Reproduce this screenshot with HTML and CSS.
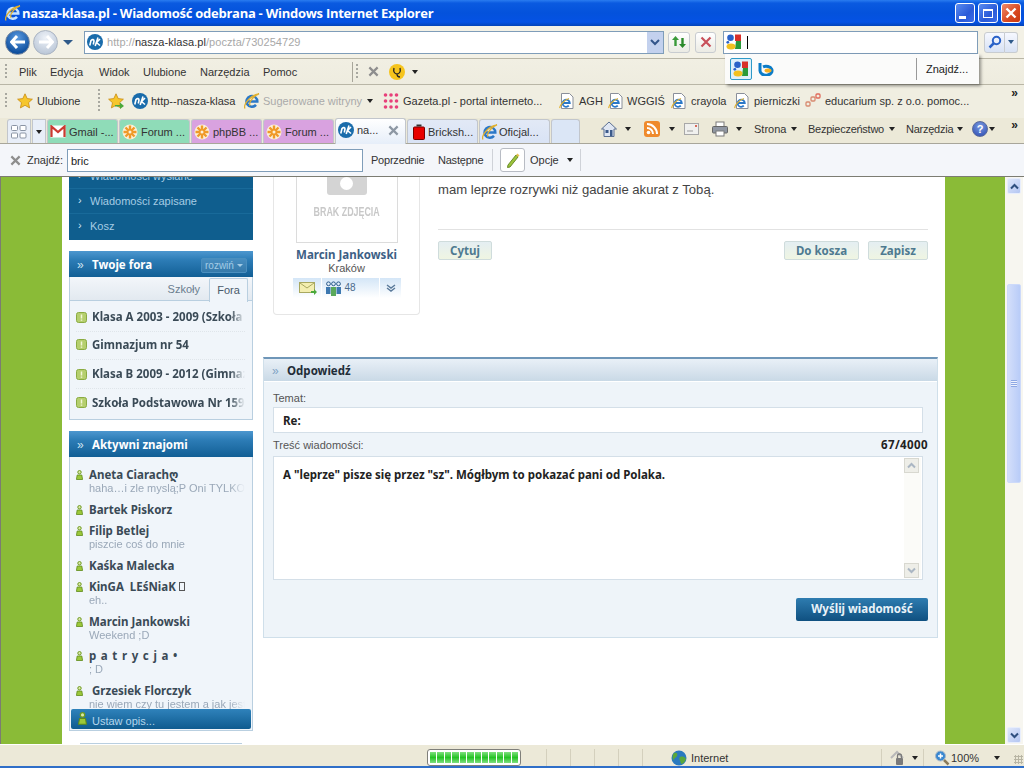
FILE: index.html
```html
<!DOCTYPE html>
<html lang="pl">
<head>
<meta charset="utf-8">
<title>nasza-klasa.pl - Wiadomość odebrana - Windows Internet Explorer</title>
<link rel="stylesheet" href="styles.css">
</head>
<body>
<svg class="defs" width="0" height="0">
  <defs>
    <symbol id="nk" viewBox="0 0 16 16"><circle cx="8" cy="8" r="8" fill="#1a6cab"/><path d="M2.800 11.500 4 6.500c1.500-1.500 3-1 3 .5l-.7 3.500M8.200 12 11 3.500M13 5 9.500 8.500l3.500 3" fill="none" stroke="#fff" stroke-width="1.600"/></symbol>
    <symbol id="ie" viewBox="0 0 16 16"><path d="M2.500 8.500h10.800a5.400 5.400 0 1 0-1.300 3.400" fill="none" stroke="currentColor" stroke-width="2.500"/><path d="M1 15.500C-1 12 6 2 15 .8c-3 1-11 7-9 12" fill="none" stroke="#e0b030" stroke-width="1.300"/></symbol>
    <symbol id="doc" viewBox="0 0 16 16"><path d="M2.500.5h8l3.500 3.500v11.500H2.500z" fill="#fff" stroke="#8a8f9a"/><path d="M3.800 10h7a3.600 3.600 0 1 0-1 2.700" fill="none" stroke="#2b78c8" stroke-width="1.800"/><path d="M1 15C0 13 5 7 10 5.500" fill="none" stroke="#e0b030" stroke-width="1.300"/></symbol>
    <symbol id="flower" viewBox="0 0 16 16"><circle cx="8" cy="8" r="7.500" fill="#fbf0d8"/><path d="M8 1.500v13M1.500 8h13M3.500 3.500l9 9M12.500 3.500l-9 9" stroke="#f09a28" stroke-width="2.400"/><circle cx="8" cy="8" r="1.500" fill="#fbf0d8"/></symbol>
    <symbol id="goog" viewBox="0 0 16 16"><path d="M9 .5h6v6.500H9z" fill="#d8302a"/><path d="M10 7h5v8H9z" fill="#2a9a3a"/><circle cx="4.500" cy="3.800" r="3.300" fill="#2a62c8"/><circle cx="1.800" cy="8.300" r="1.400" fill="#2a62c8"/><ellipse cx="5" cy="12.500" rx="4.500" ry="3" fill="#f2c020"/></symbol>
    <symbol id="friend" viewBox="0 0 7 10"><circle cx="3.500" cy="2.200" r="1.700" fill="#dbe8a8" stroke="#6e9a20"/><path d="M1.200 5h4.600l.8 4.500H.4z" fill="#9cc83a" stroke="#5e8a1a" stroke-width=".8"/></symbol>
    <symbol id="alert" viewBox="0 0 11 11"><rect x=".5" y=".5" width="10" height="10" rx="2" fill="#b5cf6e" stroke="#8aab42"/><path d="M5.500 2.500v4M5.500 7.500v1.200" stroke="#f3f7d8" stroke-width="1.500"/></symbol>
    <symbol id="chev" viewBox="0 0 9 7"><path d="M1 5.500 4.500 2 8 5.500" fill="none" stroke="#2f4f7f" stroke-width="2"/></symbol>
    <symbol id="star" viewBox="0 0 16 16"><path d="m8 .8 2.200 4.800 5.200.6-3.900 3.500 1.100 5.200L8 12.300l-4.600 2.600 1.100-5.200L.6 6.200l5.200-.6z" fill="#f6c62c" stroke="#c98a10" stroke-width=".8"/></symbol>
  </defs>
</svg>

<div class="window">
  <header class="titlebar">
    <svg class="ico16 title-ico"><use href="#ie"/></svg>
    <span class="title-text">nasza-klasa.pl - Wiadomość odebrana - Windows Internet Explorer</span>
    <div class="win-btns">
      <span class="win-btn"><i class="glyph-min"></i></span>
      <span class="win-btn"><i class="glyph-max"></i></span>
      <span class="win-btn win-close">
        <svg width="12" height="12" viewBox="0 0 12 12"><path d="m1.500 1.500 9 9m0-9-9 9" stroke="#fff" stroke-width="2.400"/></svg>
      </span>
    </div>
  </header>

  <div class="addressbar">
    <span class="nav-back"><svg width="16" height="14" viewBox="0 0 16 14"><path d="M7 1 1.500 7 7 13M2 7h13" fill="none" stroke="#fff" stroke-width="3"/></svg></span>
    <span class="nav-fwd"><svg width="16" height="14" viewBox="0 0 16 14"><path d="M9 1l5.500 6L9 13M14 7H1" fill="none" stroke="#fff" stroke-width="3"/></svg></span>
    <i class="arrow-blue"></i>
    <div class="urlbox">
      <svg class="ico16"><use href="#nk"/></svg>
      <span class="url"><span class="url-dim">http://</span>nasza-klasa.pl<span class="url-dim">/poczta/730254729</span></span>
      <span class="url-drop"><svg width="10" height="7" viewBox="0 0 10 7"><path d="M1 1l4 4 4-4" fill="none" stroke="#33558a" stroke-width="2"/></svg></span>
    </div>
    <span class="tool-btn btn-refresh"><svg width="16" height="14" viewBox="0 0 16 14"><path d="M4.500 1 1 5h2.300v6h2.400V5H8z" fill="#3a9a3a"/><path d="M11.500 13 15 9h-2.300V3h-2.400v6H8z" fill="#2a8a2a"/></svg></span>
    <span class="tool-btn btn-stop"><svg width="12" height="12" viewBox="0 0 12 12"><path d="m1.500 1.500 9 9m0-9-9 9" stroke="#c8505a" stroke-width="2.200"/></svg></span>
    <div class="searchbox"><svg class="ico16"><use href="#goog"/></svg><i class="caret"></i></div>
    <span class="tool-btn btn-search"><svg width="14" height="14" viewBox="0 0 14 14"><circle cx="8.500" cy="5.500" r="3.700" fill="none" stroke="#2a62c8" stroke-width="2"/><path d="M6 8 1.500 12.500" stroke="#2a62c8" stroke-width="2.500"/></svg></span>
    <span class="tool-btn btn-search-drop"><i class="arrow-blue small"></i></span>
  </div>

  <div class="search-pop">
    <span class="pop-active"><svg class="ico16"><use href="#goog"/></svg></span>
    <svg class="bing" width="18" height="14" viewBox="0 0 18 14"><path d="M2 1v7.500a6 4.500 0 1 0 3-3.700" fill="none" stroke="#0c7cc8" stroke-width="3"/><ellipse cx="10" cy="8.500" rx="3.500" ry="2" fill="#f8b020"/></svg>
    <span class="pop-find">Znajdź...</span>
  </div>

  <nav class="menubar">
    <i class="grip"></i>
    <span class="menu-items"><span>Plik</span><span>Edycja</span><span>Widok</span><span>Ulubione</span><span>Narzędzia</span><span>Pomoc</span></span>
    <i class="vsep menu-sep"></i>
    <i class="grip"></i>
    <svg class="menu-x" width="11" height="11" viewBox="0 0 12 12"><path d="m1.500 1.500 9 9m0-9-9 9" stroke="#8e8e8e" stroke-width="2.400"/></svg>
    <svg class="menu-doc" width="16" height="16" viewBox="0 0 16 16"><circle cx="8" cy="8" r="8" fill="#f6c41c"/><path d="M5 4c-1 4 1 6 3 6s4-2 3-6M8 10c0 2 1 3 3 3" fill="none" stroke="#222" stroke-width="1.300"/></svg>
    <i class="arrow-dark menu-arrow"></i>
  </nav>

  <div class="favbar">
    <i class="grip"></i>
    <svg class="ico16 fav-star"><use href="#star"/></svg>
    <span class="fav-label">Ulubione</span>
    <i class="grip fav-grip"></i>
    <svg class="ico16 fav-add" viewBox="0 0 16 16"><use href="#star"/><path d="M7 12h5V9.500l4 3.500-4 3v-2.500H7z" fill="#4aa83a"/></svg>
    <svg class="ico16 fav-i1"><use href="#nk"/></svg><span class="fav-t1">http--nasza-klasa</span>
    <svg class="ico16 fav-i2"><use href="#ie"/></svg><span class="fav-t2 dim">Sugerowane witryny</span><i class="arrow-dark fav-a2"></i>
    <svg class="ico16 fav-i3" viewBox="0 0 16 16"><g fill="#e8407a"><circle cx="2.500" cy="2" r="1.800"/><circle cx="8" cy="2" r="1.800"/><circle cx="13.500" cy="2" r="1.800"/><circle cx="2.500" cy="8" r="1.800"/><circle cx="8" cy="8" r="1.800"/><circle cx="13.500" cy="8" r="1.800"/><circle cx="2.500" cy="14" r="1.800"/><circle cx="8" cy="14" r="1.800"/><circle cx="13.500" cy="14" r="1.800"/></g></svg><span class="fav-t3">Gazeta.pl - portal interneto...</span>
    <svg class="ico16 fav-i4"><use href="#doc"/></svg><span class="fav-t4">AGH</span>
    <svg class="ico16 fav-i5"><use href="#doc"/></svg><span class="fav-t5">WGGIŚ</span>
    <svg class="ico16 fav-i6"><use href="#doc"/></svg><span class="fav-t6">crayola</span>
    <svg class="ico16 fav-i7"><use href="#doc"/></svg><span class="fav-t7">pierniczki</span>
    <svg class="ico16 fav-i8" viewBox="0 0 16 16"><g fill="none" stroke="#d88a70" stroke-width="1.300"><rect x="1" y="9" width="4" height="4" rx="1"/><rect x="6" y="4" width="4" height="4" rx="1"/><rect x="11" y="1" width="4" height="4" rx="1" stroke="#e06a5a"/></g></svg><span class="fav-t8">educarium sp. z o.o. pomoc...</span>
    <span class="chevrons">»</span>
  </div>

  <div class="tabbar">
    <span class="quick-tabs"><svg width="16" height="16" viewBox="0 0 16 16"><g fill="#fff" stroke="#8a94a4"><rect x=".5" y="1.500" width="6" height="5" rx="1"/><rect x="9" y="1.500" width="6" height="5" rx="1"/><rect x=".5" y="9" width="6" height="5" rx="1"/><rect x="9" y="9" width="6" height="5" rx="1"/></g></svg></span>
    <span class="quick-drop"><i class="arrow-dark"></i></span>
    <div class="tab tab-green">
      <svg width="16" height="13" viewBox="0 0 16 13"><path d="M.5.500h15v12H.5z" fill="#fff"/><path d="M1.500 12V1.500L8 7l6.500-5.500V12" fill="none" stroke="#cc3a30" stroke-width="2.200"/></svg>
      <span>Gmail -...</span>
    </div>
    <div class="tab tab-green"><svg class="ico16"><use href="#flower"/></svg><span>Forum ...</span></div>
    <div class="tab tab-violet"><svg class="ico16"><use href="#flower"/></svg><span>phpBB ...</span></div>
    <div class="tab tab-violet"><svg class="ico16"><use href="#flower"/></svg><span>Forum ...</span></div>
    <div class="tab tab-active"><svg class="ico16"><use href="#nk"/></svg><span>na...</span><svg class="tab-x" width="11" height="11" viewBox="0 0 12 12"><path d="m1.500 1.500 9 9m0-9-9 9" stroke="#8e98a4" stroke-width="2.400"/></svg></div>
    <div class="tab"><svg class="brick" width="12" height="16" viewBox="0 0 12 16"><path d="M3.500.5h5v2h-5z" fill="#333"/><rect x=".5" y="3" width="11" height="12.500" rx="1" fill="#e80000" stroke="#700"/></svg><span>Bricksh...</span></div>
    <div class="tab tab-ie"><svg class="ico16"><use href="#ie"/></svg><span>Oficjal...</span></div>
    <div class="tab tab-new"></div>
    <div class="cmdbar">
      <svg class="ico16 cmd-home" viewBox="0 0 16 16"><path d="M8 1 .5 8H3v7.500h10V8h2.500z" fill="#dfe6f2" stroke="#5a6f92"/><rect x="9" y="9" width="2.500" height="6" fill="#3c5a8a"/><rect x="4.500" y="9" width="3" height="3" fill="#3c5a8a"/></svg>
      <i class="arrow-dark cmd-a1"></i>
      <svg class="ico16 cmd-rss" viewBox="0 0 16 16"><rect width="16" height="16" rx="3" fill="#ef8a2c"/><circle cx="4.500" cy="11.500" r="1.800" fill="#fff"/><path d="M3 7a6 6 0 0 1 6 6M3 3a10 10 0 0 1 10 10" fill="none" stroke="#fff" stroke-width="2"/></svg>
      <i class="arrow-dark cmd-a2"></i>
      <svg class="cmd-mail" width="15" height="12" viewBox="0 0 15 12"><rect x=".5" y=".5" width="14" height="11" fill="#f0f0ee" stroke="#a8a8a8"/><path d="M3 8h6" stroke="#999"/><rect x="11" y="2" width="2" height="2" fill="#d86a5a"/></svg>
      <svg class="ico16 cmd-print" viewBox="0 0 16 16"><rect x="4" y="1" width="8" height="5" fill="#fff" stroke="#7a7a7a"/><rect x=".5" y="5.500" width="15" height="6.500" rx="1" fill="#8f96a2" stroke="#666"/><rect x="4" y="10" width="8" height="5" fill="#fff" stroke="#7a7a7a"/></svg>
      <i class="arrow-dark cmd-a3"></i>
      <span class="cmd-strona">Strona</span><i class="arrow-dark cmd-a4"></i>
      <span class="cmd-bez">Bezpieczeństwo</span><i class="arrow-dark cmd-a5"></i>
      <span class="cmd-narz">Narzędzia</span><i class="arrow-dark cmd-a6"></i>
      <span class="cmd-help">?</span><i class="arrow-dark cmd-a7"></i>
      <span class="chevrons cmd-more">»</span>
    </div>
  </div>

  <div class="findbar">
    <svg class="find-x" width="11" height="11" viewBox="0 0 12 12"><path d="m1.500 1.500 9 9m0-9-9 9" stroke="#8e8e8e" stroke-width="2.400"/></svg>
    <span class="find-label">Znajdź:</span>
    <span class="find-input">bric</span>
    <span class="find-prev">Poprzednie</span>
    <span class="find-next">Następne</span>
    <i class="find-sep"></i>
    <span class="find-pen"><svg width="14" height="16" viewBox="0 0 14 16"><path d="M2 13 1.500 15.500 4 15l8-10-2-2z" fill="#9cc43a" stroke="#6a8a2a"/><path d="m10 3 1.500-1.500 2 2L12 5z" fill="#e8c050"/></svg></span>
    <span class="find-opt">Opcje</span>
    <i class="arrow-dark find-arrow"></i>
    <i class="find-sep find-sep2"></i>
  </div>

  <div class="viewport">
    <div class="backdrop"></div>
    <div class="page">
      <aside class="sidebar">
        <ul class="side-menu">
          <li>Wiadomości wysłane</li>
          <li>Wiadomości zapisane</li>
          <li>Kosz</li>
        </ul>

        <section class="panel panel-forums">
          <h3 class="panel-head"><span class="dbl">»</span>Twoje fora<span class="expand">rozwiń <i class="arrow-pale"></i></span></h3>
          <div class="forum-tabs"><span>Szkoły</span><span class="forum-tab-on">Fora</span></div>
          <ul class="forum-list">
            <li><svg class="alert"><use href="#alert"/></svg><span class="fade">Klasa A 2003 - 2009 (Szkoła Podstawowa)</span></li>
            <li><svg class="alert"><use href="#alert"/></svg><span class="fade">Gimnazjum nr 54</span></li>
            <li><svg class="alert"><use href="#alert"/></svg><span class="fade">Klasa B 2009 - 2012 (Gimnazjum)</span></li>
            <li><svg class="alert"><use href="#alert"/></svg><span class="fade">Szkoła Podstawowa Nr 159</span></li>
          </ul>
        </section>

        <section class="panel panel-friends">
          <h3 class="panel-head"><span class="dbl">»</span>Aktywni znajomi</h3>
          <ul class="friends">
            <li><svg class="friend"><use href="#friend"/></svg><b>Aneta Ciarachღ</b><small>haha…i zle myslą;P Oni TYLKO tak mówią</small></li>
            <li><svg class="friend"><use href="#friend"/></svg><b>Bartek Piskorz</b></li>
            <li><svg class="friend"><use href="#friend"/></svg><b>Filip Betlej</b><small>piszcie coś do mnie</small></li>
            <li><svg class="friend"><use href="#friend"/></svg><b>Kaśka Malecka</b></li>
            <li><svg class="friend"><use href="#friend"/></svg><b>KinGA&nbsp; LEśNiaK <i class="tofu"></i></b><small>eh..</small></li>
            <li><svg class="friend"><use href="#friend"/></svg><b>Marcin Jankowski</b><small>Weekend ;D</small></li>
            <li><svg class="friend"><use href="#friend"/></svg><b class="spaced">p a t r y c j a •</b><small>; D</small></li>
            <li class="last"><svg class="friend"><use href="#friend"/></svg><b>&nbsp;Grzesiek Florczyk</b><small>nie wiem czy tu jestem a jak jestem to</small></li>
          </ul>
          <div class="set-status"><svg class="friend"><use href="#friend"/></svg>Ustaw opis...</div>
        </section>
        <div class="side-next"></div>
      </aside>

      <main class="main">
        <div class="message">
          <div class="author">
            <div class="photo">
              <div class="camera"><i></i></div>
              <span class="no-photo">BRAK ZDJĘCIA</span>
            </div>
            <div class="author-name">Marcin Jankowski</div>
            <div class="author-city">Kraków</div>
            <div class="author-tools">
              <span class="at-mail"><svg width="18" height="14" viewBox="0 0 18 14"><rect x=".5" y="1.500" width="15" height="10" fill="#f3eeb0" stroke="#a8a860"/><path d="m1 2 7 5 7-5" fill="none" stroke="#a8a860"/><path d="M12 10h3V8l3 3-3 3v-2h-3z" fill="#4aa83a"/></svg></span>
              <span class="at-friends"><svg width="17" height="15" viewBox="0 0 17 15"><g fill="none" stroke="#2a5a8a"><circle cx="3.500" cy="2.800" r="1.900"/><circle cx="13.500" cy="2.800" r="1.900"/><circle cx="8.500" cy="2.800" r="1.900"/></g><g fill="#3d78b0"><path d="M1 6h4.500v7H1zM11.500 6H16v7h-4.500z"/></g><path d="M6 6h5v9H6z" fill="#5aa85a"/></svg><span>48</span></span>
              <span class="at-more"><svg width="10" height="8" viewBox="0 0 10 8"><path d="m1 1 4 3 4-3M1 4l4 3 4-3" fill="none" stroke="#5a7a9a" stroke-width="1.400"/></svg></span>
            </div>
          </div>
          <div class="msg-body">
            <p class="msg-text">mam leprze rozrywki niż gadanie akurat z Tobą.</p>
            <hr class="msg-rule">
            <div class="msg-actions">
              <span class="btn-soft btn-cite">Cytuj</span>
              <span class="spacer"></span>
              <span class="btn-soft btn-trash">Do kosza</span>
              <span class="btn-soft btn-save">Zapisz</span>
            </div>
          </div>
        </div>

        <section class="reply">
          <h3 class="reply-head"><span class="dbl">»</span>Odpowiedź</h3>
          <div class="reply-body">
            <label class="lbl lbl-subject">Temat:</label>
            <div class="subject">Re:</div>
            <div class="lbl-row"><label class="lbl">Treść wiadomości:</label><b class="counter">67/4000</b></div>
            <div class="textarea">
              <p>A "leprze" pisze się przez "sz". Mógłbym to pokazać pani od Polaka.</p>
              <div class="ta-scroll">
                <span class="ta-btn"><svg class="sb-ico"><use href="#chev"/></svg></span>
                <span class="ta-btn ta-down"><svg class="sb-ico"><use href="#chev"/></svg></span>
              </div>
            </div>
            <div class="send-row"><span class="btn-send">Wyślij wiadomość</span></div>
          </div>
        </section>
      </main>
    </div>
    <div class="backdrop backdrop-r"></div>
    <div class="scrollbar">
      <span class="sb-btn"><svg class="sb-ico"><use href="#chev"/></svg></span>
      <span class="sb-thumb"><i></i></span>
      <span class="sb-btn sb-down"><svg class="sb-ico"><use href="#chev"/></svg></span>
    </div>
  </div>

  <footer class="statusbar">
    <div class="progress"><i></i><i></i><i></i><i></i><i></i><i></i><i></i><i></i><i></i><i></i><i></i><i></i></div>
    <i class="st-div st-d1"></i><i class="st-div"></i><i class="st-div"></i><i class="st-div"></i><i class="st-div"></i>
    <svg class="ico16 globe" viewBox="0 0 16 16"><circle cx="8" cy="8" r="7.500" fill="#2a7ac0"/><path d="M3 3c3-1 4 1 3 3S2 8 3 11c-2-2-2-6 0-8zM9 7c3-1 5 0 6 2-1 3-3 5-5 5 0-3-3-5-1-7z" fill="#5aa83a"/></svg>
    <span class="st-zone">Internet</span>
    <i class="st-div st-d2"></i>
    <svg class="ico16 st-lock" viewBox="0 0 16 16"><path d="M1 8 7 2l6 6" fill="none" stroke="#b8b8b8" stroke-width="2"/><rect x="6" y="8" width="7" height="7" rx="1" fill="#7a7a7a"/><path d="M7.500 8V6a2 2 0 0 1 4 0v2" fill="none" stroke="#7a7a7a" stroke-width="1.300"/></svg>
    <i class="arrow-dark st-a1"></i>
    <i class="st-div st-d3"></i>
    <svg class="ico16 st-zoom" viewBox="0 0 16 16"><circle cx="6.500" cy="6" r="5" fill="#3a88d0" stroke="#a8b8c8"/><path d="M4 6h5M6.500 3.500v5" stroke="#fff" stroke-width="1.500"/><path d="m10 10 4.500 4.500" stroke="#8a7a5a" stroke-width="2.500"/></svg>
    <span class="st-pct">100%</span>
    <i class="arrow-dark st-a2"></i>
    <i class="st-grip"></i>
  </footer>
  <div class="taskbar"></div>
</div>
</body>
</html>
```

FILE: styles.css
```css
* { box-sizing: border-box; }
html, body { margin: 0; padding: 0; }
body { width: 1024px; height: 768px; overflow: hidden; font: 11px/14px "Liberation Sans", Arial, sans-serif; color: #222; }
ul { list-style: none; margin: 0; padding: 0; }
h3, p { margin: 0; }
i { display: block; font-style: normal; }
svg { display: block; flex: none; color: #2b78c8; }
.defs { position: absolute; }
.ico16 { width: 16px; height: 16px; }

.window { position: relative; width: 1024px; height: 768px; display: flex; flex-direction: column; background: #ece9d8; }

/* title bar */
.titlebar { height: 26px; display: flex; align-items: center; padding-left: 5px; background: linear-gradient(#2a7cf0 0, #0a5ae0 12%, #0452dc 50%, #0552e4 85%, #0444b8 100%); }
.title-ico { color: #c4e2ff; }
.title-text { margin-left: 1px; font: bold 13px/16px "Open Sans", sans-serif; color: #fff; letter-spacing: -.02em; }
.win-btns { margin-left: auto; margin-right: 3px; display: flex; gap: 3px; }
.win-btn { width: 20px; height: 20px; border: 1px solid #fff; border-radius: 3px; background: linear-gradient(135deg, #5a8cf0, #2a5ad8 60%, #3c6ce8); display: flex; align-items: center; justify-content: center; }
.win-close { background: linear-gradient(135deg, #f08a6a, #d84820 60%, #c83810); }
.glyph-min { width: 7px; height: 3px; background: #fff; margin: 8px 6px 0 0; }
.glyph-max { width: 10px; height: 9px; border: 1px solid #fff; border-top-width: 2px; }

/* address bar */
.addressbar { height: 33px; display: flex; align-items: center; background: #f3f1e6; border-bottom: 1px solid #b9b6a6; padding-left: 5px; }
.nav-back { width: 25px; height: 25px; border-radius: 50%; background: radial-gradient(circle at 50% 30%, #5a9ae0, #0f4f9e 75%); border: 1px solid #7a8aa0; display: flex; align-items: center; justify-content: center; }
.nav-fwd { width: 25px; height: 25px; margin-left: 3px; border-radius: 50%; background: radial-gradient(circle at 50% 30%, #eef2f8, #bcc8d8 80%); border: 1px solid #aab4c2; display: flex; align-items: center; justify-content: center; }
.arrow-blue { width: 0; height: 0; border: 5px solid transparent; border-top: 5px solid #2f5a8a; border-bottom: 0; margin-left: 5px; }
.arrow-blue.small { border-width: 4px 3.500px 0; margin: 0; }
.urlbox { width: 580px; height: 23px; margin-left: 11px; display: flex; align-items: center; padding-left: 2px; background: #fff; border: 1px solid #7f9db9; }
.url { margin-left: 4px; font-size: 11px; color: #333; letter-spacing: .005em; }
.url-dim { color: #a8a8a8; }
.url-drop { margin-left: auto; width: 16px; height: 21px; background: #c3d1ee; display: flex; align-items: center; justify-content: center; }
.tool-btn { height: 21px; display: flex; align-items: center; justify-content: center; border: 1px solid #c8ccd0; border-radius: 3px; background: linear-gradient(#fff, #ebebe4); }
.btn-refresh { width: 22px; margin-left: 4px; }
.btn-stop { width: 21px; margin-left: 5px; }
.searchbox { width: 255px; height: 23px; margin-left: 7px; padding-left: 2px; display: flex; align-items: center; background: #fff; border: 1px solid #7f9db9; }
.caret { width: 1px; height: 13px; background: #000; margin-left: 5px; }
.btn-search { width: 21px; margin-left: 6px; background: linear-gradient(#f6f8ff, #d8e2f4); border-radius: 3px 0 0 3px; }
.btn-search-drop { width: 13px; background: linear-gradient(#f6f8ff, #d8e2f4); border-radius: 0 3px 3px 0; border-left: 0; }

/* search provider popup */
.search-pop { position: absolute; left: 725px; top: 54px; width: 254px; height: 30px; display: flex; align-items: center; padding-left: 5px; background: #fbfbfa; box-shadow: 2px 2px 3px rgba(0,0,0,.4); z-index: 5; }
.pop-active { width: 22px; height: 22px; display: flex; align-items: center; justify-content: center; background: #dff0fa; border: 1px solid #2f9ac8; border-radius: 2px; }
.bing { margin-left: 6px; }
.pop-find { margin-left: auto; width: 63px; padding-left: 9px; height: 22px; line-height: 22px; border-left: 1px solid #999; }

/* menu bar */
.menubar { height: 26px; display: flex; align-items: center; padding-left: 5px; background: linear-gradient(#f1efe3, #eeecdf); border-bottom: 1px solid #b9b6a6; }
.grip { width: 2px; height: 16px; background: repeating-linear-gradient(#a8a8a0 0 2px, transparent 2px 4px); }
.menu-items { display: flex; margin-left: 12px; color: #333; width: 333px; }
.menu-items span:nth-child(1) { width: 31px; }
.menu-items span:nth-child(2) { width: 49px; }
.menu-items span:nth-child(3) { width: 44px; }
.menu-items span:nth-child(4) { width: 57px; }
.menu-items span:nth-child(5) { width: 63px; }
.vsep { width: 1px; height: 20px; background: #a8a69a; }
.menu-sep { margin-left: 0; margin-right: 3px; }
.menu-x { margin-left: 10px; }
.menu-doc { margin-left: 10px; }
.arrow-dark { width: 0; height: 0; border: 3.500px solid transparent; border-top: 4px solid #222; border-bottom: 0; }
.menu-arrow { margin-left: 7px; }

/* favourites */
.favbar { height: 33px; display: flex; align-items: center; padding: 0 0 2px 5px; background: #f0eee1; color: #333; position: relative; }
.fav-star { margin-left: 10px; }
.fav-label { margin-left: 4px; width: 41px; }
.fav-grip { margin-left: 20px; height: 24px; }
.fav-add { margin-left: 8px; }
.fav-i1 { margin-left: 8px; }
.fav-t1 { margin-left: 3px; width: 84px; white-space: nowrap; }
.fav-i2 { margin-left: 9px; }
.fav-t2 { margin-left: 3px; width: 99px; white-space: nowrap; }
.dim { color: #aaa; }
.fav-a2 { margin-left: 5px; }
.fav-i3 { margin-left: 10px; }
.fav-t3 { margin-left: 4px; width: 143px; white-space: nowrap; }
.fav-i4 { margin-left: 13px; }
.fav-t4 { margin-left: 4px; width: 20px; }
.fav-i5 { margin-left: 9px; }
.fav-t5 { margin-left: 3px; width: 35px; }
.fav-i6 { margin-left: 9px; }
.fav-t6 { margin-left: 4px; width: 34px; }
.fav-i7 { margin-left: 9px; }
.fav-t7 { margin-left: 4px; width: 42px; }
.fav-i8 { margin-left: 9px; }
.fav-t8 { margin-left: 4px; width: 144px; white-space: nowrap; }
.chevrons { position: absolute; right: 6px; top: 2px; font: bold 12px/12px "Liberation Sans", sans-serif; color: #222; }

/* tabs */
.tabbar { height: 26px; display: flex; align-items: flex-end; padding-left: 7px; background: #ece9d8; border-bottom: 1px solid #a8a69a; color: #333; position: relative; }
.quick-tabs { width: 24px; height: 24px; display: flex; align-items: center; justify-content: center; background: #e8eef8; border: 1px solid #c2c6cc; border-bottom: 0; border-radius: 3px 0 0 0; }
.quick-drop { width: 14px; height: 24px; margin-left: 1px; display: flex; align-items: center; justify-content: center; background: #e8eef8; border: 1px solid #c2c6cc; border-bottom: 0; margin-right: 1px; }
.tab { width: 71px; height: 24px; margin-right: 1px; display: flex; align-items: center; gap: 3px; padding-left: 2px; white-space: nowrap; background: linear-gradient(#e2e9f6, #d9e3f5); border: 1px solid #c2c6cc; border-bottom: 0; border-radius: 3px 3px 0 0; }
.tab-green { background: #8fdcb8; }
.tab-violet { background: #d9a2e0; }
.tab-active { height: 26px; background: linear-gradient(#fff, #e6eef9); margin-bottom: -1px; padding-bottom: 3px; position: relative; }
.tab-x { margin-left: 7px; }
.tab-ie { gap: 1px; }
.brick { margin-left: 3px; }
.tab-new { width: 29px; margin-left: 0; background: #dbe6f6; }
.cmdbar { display: flex; align-items: center; height: 24px; margin-left: 0; flex: 1; padding-bottom: 5px; }
.cmd-home { margin-left: 20px; }
.cmd-a1 { margin-left: 8px; }
.cmd-rss { margin-left: 13px; }
.cmd-a2 { margin-left: 9px; }
.cmd-mail { margin-left: 9px; }
.cmd-print { margin-left: 13px; }
.cmd-a3 { margin-left: 8px; }
.cmd-strona { margin-left: 12px; width: 33px; }
.cmd-a4 { margin-left: 4px; }
.cmd-bez { margin-left: 11px; width: 78px; white-space: nowrap; letter-spacing: -.25px; }
.cmd-a5 { margin-left: 3px; }
.cmd-narz { margin-left: 11px; width: 50px; letter-spacing: -.25px; }
.cmd-a6 { margin-left: 1px; }
.cmd-help { margin-left: 9px; width: 16px; height: 16px; border-radius: 50%; border: 1px solid #5a6a9a; background: radial-gradient(circle at 50% 30%, #7a9ae0, #2a4ab0); color: #fff; font: bold 11px/14px "Liberation Sans", sans-serif; text-align: center; }
.cmd-a7 { margin-left: 1px; }
.cmd-more { top: 1px; }

/* find bar */
.findbar { height: 32px; display: flex; align-items: center; padding-left: 10px; background: #f4f6fa; color: #333; }
.find-label { margin-left: 6px; width: 35px; }
.find-input { width: 296px; height: 23px; margin-left: 5px; padding-left: 3px; line-height: 23px; background: #fff; border: 1px solid #7f9db9; color: #222; }
.find-prev { margin-left: 8px; width: 53px; white-space: nowrap; letter-spacing: -.22px; }
.find-next { margin-left: 14px; width: 46px; white-space: nowrap; letter-spacing: -.22px; }
.find-sep { width: 1px; height: 22px; background: #cfd2d8; margin-left: 8px; }
.find-pen { width: 25px; height: 24px; margin-left: 7px; display: flex; align-items: center; justify-content: center; background: #fff; border: 1px solid #b8bcc4; border-radius: 3px; }
.find-opt { margin-left: 5px; width: 28px; }
.find-arrow { margin-left: 9px; }
.find-sep2 { margin-left: 7px; }

/* viewport */
.viewport { height: 568px; display: flex; border-top: 1px solid #7c7c72; border-left: 1px solid #7c7c72; overflow: hidden; background: #fff; }
.backdrop { width: 61px; background: #8abb37; flex: none; }
.backdrop-r { width: 60px; }
.page { width: 883px; flex: none; display: flex; background: #fff; height: 567px; overflow: hidden; }
.sidebar { width: 184px; margin-left: 7px; flex: none; }
.side-menu { margin-top: -13px; height: 76px; padding-bottom: 1px; background: #0f5e8e; color: #a6cce4; }
.side-menu li { height: 25px; padding-left: 21px; position: relative; border-bottom: 1px solid #186a9a; font: 11px/24px "Liberation Sans", sans-serif; }
.side-menu li:last-child { border: 0; }
.side-menu li::before { content: "›"; position: absolute; left: 9px; top: -1px; color: #cfe4f2; }

.panel { margin-top: 11px; background: #f0f5fa; border: 1px solid #b9cfe0; }
.panel-forums { height: 169px; }
.panel-friends { height: 300px; display: flex; flex-direction: column; position: relative; }
.panel-head { height: 26px; margin: -1px -1px 0; padding-top: 2px; display: flex; align-items: center; font: bold 11.500px/16px "Noto Sans", sans-serif; color: #fff; background: linear-gradient(#4d97cf 0, #2c7cb6 35%, #125f95 100%); }
.dbl { width: 23px; padding-left: 8px; font: 12px/12px "Liberation Sans", sans-serif; color: #cfe4f2; }
.reply-head .dbl { color: #7fa3c4; }
.expand { margin-left: auto; margin-right: 6px; width: 46px; height: 15px; display: flex; align-items: center; gap: 3px; padding-left: 3px; font: 10px/13px "Liberation Sans", sans-serif; color: #a3cce6; background: rgba(255,255,255,.12); border: 1px solid #4a8fbf; border-radius: 2px; }
.arrow-pale { border: 3px solid transparent; border-top: 3px solid #a3cce6; border-bottom: 0; width: 0; height: 0; }
.forum-tabs { height: 24px; display: flex; justify-content: flex-end; padding-right: 4px; color: #6a7d8e; background: linear-gradient(#f3f6fa, #e2e9f0); border-bottom: 1px solid #b9cfe0; }
.forum-tabs span { line-height: 25px; margin-right: 9px; }
.forum-tabs .forum-tab-on { width: 39px; height: 24px; margin: 1px 0 0; background: #f0f5fa; text-align: center; color: #4a5a6a; border: 1px solid #b9cfe0; border-bottom: 0; border-radius: 2px 2px 0 0; line-height: 22px; }
.forum-list { padding: 2px 7px 0 6px; }
.forum-list li { height: 29px; display: flex; align-items: center; font: bold 11.500px/14px "Noto Sans", sans-serif; color: #3a4a56; border-bottom: 1px dotted #dfe5ea; }
.forum-list li:nth-child(2) { height: 28px; padding-bottom: 2px; }
.forum-list li:last-child { border: 0; height: 27px; }
.alert { width: 11px; height: 11px; margin-right: 5px; }
.fade { flex: 1; min-width: 0; overflow: hidden; white-space: nowrap; -webkit-mask-image: linear-gradient(90deg, #000 90%, transparent); mask-image: linear-gradient(90deg, #000 90%, transparent); }

.friends { flex: 1; padding: 11px 0 0 5px; overflow: hidden; }
.friends li { position: relative; padding: 0 0 7.500px 14px; }
.friends b { display: block; height: 14px; font: bold 11.500px/14px "Noto Sans", "DejaVu Sans", sans-serif; color: #3a4a56; white-space: nowrap; }
.friends small { display: block; font: 11px/13px "Liberation Sans", sans-serif; color: #9aa8b8; white-space: nowrap; overflow: hidden; width: 156px; -webkit-mask-image: linear-gradient(90deg, #000 90%, transparent); mask-image: linear-gradient(90deg, #000 90%, transparent); }
.friends b.spaced { letter-spacing: .07em; }
.tofu { display: inline-block; width: 6px; height: 9px; border: 1px solid #555; }
.friend { width: 7px; height: 10px; position: absolute; left: 1px; top: 2px; }
.set-status { position: absolute; left: 1px; right: 1px; bottom: 1px; height: 20px; display: flex; align-items: center; padding: 4px 0 0 21px; color: #b5d6ec; background: linear-gradient(#2f82bb, #0f5b8f); border-radius: 2px; }
.set-status .friend { left: 7px; top: 3px; width: 9px; height: 13px; }
.side-next { height: 1px; margin: 12px 11px 0; background: #b9cfe0; }

.main { width: 675px; margin-left: 10px; flex: none; }
.message { height: 181px; margin-top: -1px; display: flex; }
.author { width: 147px; height: 139px; margin-left: 10px; flex: none; display: flex; flex-direction: column; align-items: center; border: 1px solid #e6e6e6; border-top: 0; border-radius: 0 0 4px 4px; }
.photo { width: 102px; height: 67px; border: 1px solid #dcdcdc; border-top: 0; display: flex; flex-direction: column; align-items: center; }
.camera { width: 40px; height: 19px; background: #d4d4d4; border-radius: 0 0 3px 3px; display: flex; justify-content: center; }
.camera i { width: 13px; height: 13px; border-radius: 50%; background: #fff; margin-top: 1px; }
.no-photo { margin-top: 10px; font: bold 12px/14px "Liberation Sans", sans-serif; color: #c8c8c8; white-space: nowrap; transform: scaleX(.74); }
.author-name { margin-top: 5px; font: bold 11.500px/14px "Noto Sans", sans-serif; color: #3d6085; white-space: nowrap; }
.author-city { font: 11px/13px "Liberation Sans", sans-serif; color: #555; }
.author-tools { width: 108px; height: 20px; margin-top: 3px; display: flex; gap: 1px; }
.author-tools span { height: 20px; background: linear-gradient(#d4e6f7, #fff); display: flex; align-items: center; }
.at-mail { width: 28px; padding-left: 6px; }
.at-friends { width: 57px; padding-left: 3px; gap: 3px; }
.at-friends span { background: none; font-size: 10px; color: #4a6a8a; }
.at-more { width: 21px; padding-left: 6px; }
.msg-body { width: 490px; margin-left: 18px; flex: none; }
.msg-text { padding-top: 6px; height: 53px; font: 13.100px/16px "Liberation Sans", sans-serif; color: #444; }
.msg-rule { height: 1px; margin: 0 0 11px; border: 0; background: #e2e2e2; }
.msg-actions { display: flex; gap: 9px; }
.spacer { flex: 1; }
.btn-soft { height: 19px; display: block; text-align: center; font: bold 11.500px/17px "Noto Sans", sans-serif; color: #4e7a90; background: linear-gradient(#e4eef2, #eff5e2); border: 1px solid #cfdcdc; border-radius: 2px; }
.btn-cite { width: 54px; }
.btn-trash { width: 75px; }
.btn-save { width: 60px; }

.reply { height: 281px; background: #eef4f9; border: 1px solid #cfdfea; border-top: 2px solid #6f96b8; }
.reply-head { height: 23px; padding-top: 2px; display: flex; align-items: center; font: bold 11.500px/14px "Noto Sans", sans-serif; color: #1f2d38; background: linear-gradient(#e9f0f7, #c9d9e6); border-bottom: 1px solid #fff; }
.reply-body { padding: 0 9px; }
.lbl { display: block; color: #555; font: 11px/14px "Liberation Sans", sans-serif; }
.lbl-subject { padding-top: 9px; }
.subject { width: 650px; height: 26px; margin-top: 2px; padding-left: 9px; font: bold 11.500px/25px "Noto Sans", sans-serif; color: #222; background: #fff; border: 1px solid #d4dfe8; }
.lbl-row { display: flex; justify-content: space-between; height: 23px; padding-top: 5px; }
.counter { font: bold 11.500px/14px "Noto Sans", sans-serif; color: #222; letter-spacing: .4px; }
.textarea { width: 650px; height: 124px; padding: 11px 0 0 9px; background: #fff; border: 1px solid #d4dfe8; position: relative; font: bold 11.500px/14px "Noto Sans", sans-serif; color: #222; }
.ta-scroll { position: absolute; right: 1px; top: 1px; bottom: 1px; width: 17px; display: flex; flex-direction: column; justify-content: space-between; background: #fbfbf8; }
.ta-btn { width: 15px; height: 15px; display: flex; align-items: center; justify-content: center; background: #eeeee8; border: 1px solid #d8d8d0; }
.ta-btn .sb-ico { opacity: .35; }
.ta-down .sb-ico { transform: rotate(180deg); }
.send-row { display: flex; justify-content: flex-end; margin-top: 18px; }
.btn-send { width: 132px; height: 23px; font: bold 11.500px/22px "Noto Sans", sans-serif; text-align: center; color: #eaf3f9; background: linear-gradient(#2e7cb0, #0f5080); border-radius: 2px; }

.scrollbar { width: 18px; flex: none; display: flex; flex-direction: column; padding: 1px 2px 1px 2px; background: #f7f6f0; }
.sb-btn { width: 14px; height: 16px; flex: none; display: flex; align-items: center; justify-content: center; background: linear-gradient(135deg, #dfe7fb, #b4c6f2); border: 1px solid #e8eefc; border-radius: 2px; }
.sb-ico { width: 9px; height: 7px; }
.sb-down { margin-top: auto; }
.sb-down .sb-ico { transform: rotate(180deg); }
.sb-thumb { width: 14px; height: 199px; margin-top: 90px; display: flex; align-items: center; justify-content: center; background: linear-gradient(90deg, #d3defa, #b9ccf8); border: 1px solid #cddafa; border-radius: 2px; }
.sb-thumb i { width: 6px; height: 7px; background: repeating-linear-gradient(#8ea8e4 0 1px, #eef2fc 1px 2px); }

/* status bar */
.statusbar { height: 22px; display: flex; align-items: center; padding: 4px 0 0 427px; background: #ece9d8; border-top: 1px solid #fff; color: #333; }
.progress { width: 94px; height: 17px; display: flex; align-items: center; gap: 1px; padding: 0 2px; background: #fff; border: 1px solid #7f7f7a; border-radius: 3px; }
.progress i { width: 7px; height: 11px; background: linear-gradient(#7fe07f, #26c326 50%, #7fe07f); }
.st-div { width: 1px; height: 17px; background: #d4d0bd; margin-left: 23px; }
.st-d1 { margin-left: 25px; }
.globe { margin-left: 28px; }
.st-zone { margin-left: 4px; width: 41px; }
.st-d2 { margin-left: 149px; }
.st-lock { margin-left: 8px; }
.st-a1 { margin-left: 6px; }
.st-d3 { margin-left: 5px; }
.st-zoom { margin-left: 10px; }
.st-pct { margin-left: 1px; width: 29px; }
.st-a2 { margin-left: 14px; }
.st-grip { width: 9px; height: 9px; margin: 4px 1px 0 auto; background: radial-gradient(circle, #b8b5a4 1px, transparent 1.200px) 0 0 / 3px 3px; }
.taskbar { height: 2px; background: #2f6fc8; flex: none; }
```
